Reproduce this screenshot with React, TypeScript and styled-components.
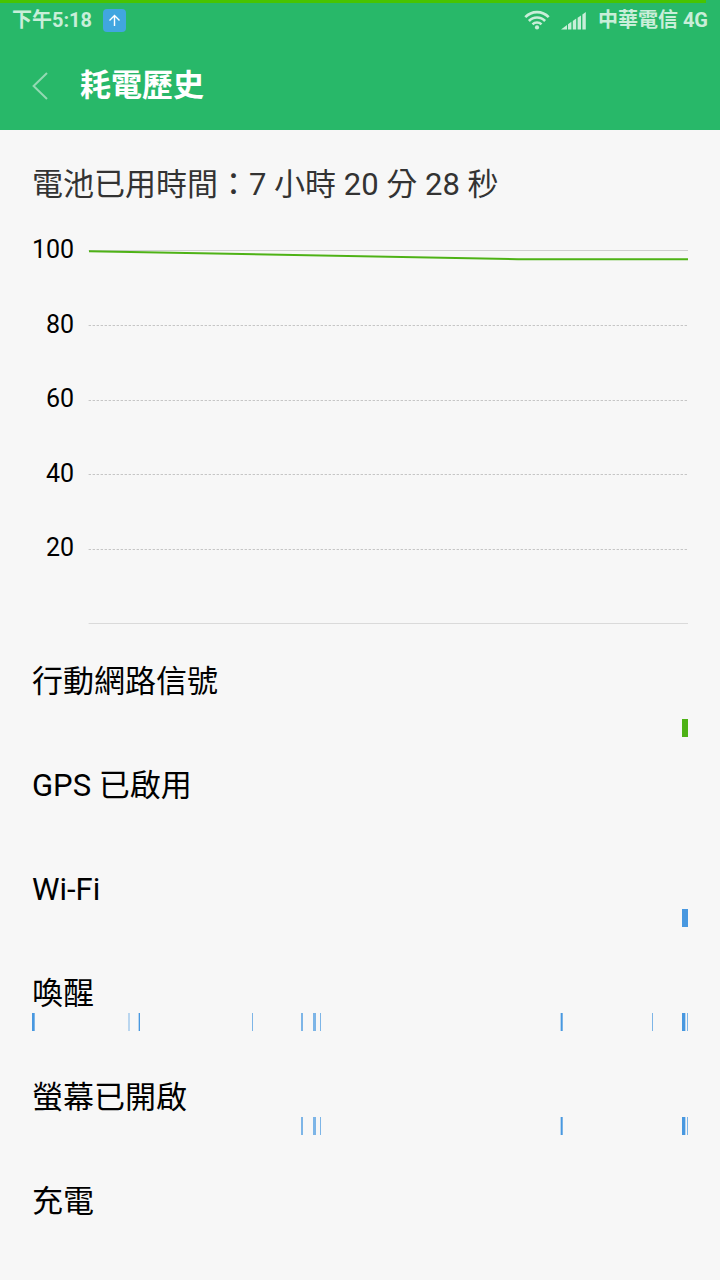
import React from "react";
import styled, { createGlobalStyle } from "styled-components";

const GlobalStyle = createGlobalStyle`
  *, *::before, *::after { box-sizing: border-box; }
  body {
    margin: 0;
    background: #f7f7f7;
    color: #000;
    font-family: Roboto, "Noto Sans CJK TC", sans-serif;
  }
`;

const Page = styled.div`
  display: flex;
  flex-direction: column;
`;

const TopArea = styled.div`
  background: #28b869;
`;

const BatteryTrack = styled.div`
  height: 3px;
`;

const BatteryFill = styled.div`
  height: 100%;
  background: #48c400;
`;

const StatusBar = styled.div`
  display: flex;
  align-items: center;
  justify-content: space-between;
  height: 34px;
  padding: 0 12px;
  color: #c9eed9;
  font-size: 20px;
  font-weight: 700;
  line-height: 32px;
`;

const StatusGroup = styled.div`
  display: flex;
  align-items: center;
  gap: 11px;
`;

const UploadBadge = styled.span`
  display: flex;
  align-items: center;
  justify-content: center;
  width: 23px;
  height: 23px;
  border-radius: 4px;
  background: #41a6e0;
`;

const TitleBar = styled.header`
  display: flex;
  align-items: center;
  gap: 16px;
  height: 93px;
  padding: 4px 16px 0;
`;

const BackButton = styled.button`
  display: flex;
  align-items: center;
  justify-content: center;
  width: 48px;
  height: 48px;
  padding: 0;
  border: 0;
  background: none;
`;

const Title = styled.h1`
  margin: 0;
  color: #fff;
  font-size: 31px;
  font-weight: 700;
  line-height: 40px;
`;

const Content = styled.main`
  display: flex;
  flex-direction: column;
  padding: 35px 32px 32px;
`;

const Summary = styled.p`
  margin: 0 0 31px;
  color: #333;
  font-size: 31px;
  line-height: 40px;
`;

const Chart = styled.section`
  display: flex;
  gap: 14px;
  margin-bottom: 38px;
`;

const AxisLabels = styled.div`
  display: flex;
  flex-direction: column;
  justify-content: space-between;
  width: 42px;
  height: 326px;
  font-size: 25px;
  line-height: 28px;
  text-align: right;
`;

const PlotArea = styled.div`
  flex: 1;
  min-width: 0;
  padding-top: 14px;
`;

const Plot = styled.svg`
  display: block;
  width: 100%;
  height: 374px;
`;

const History = styled.section`
  display: flex;
  flex-direction: column;
  gap: 46px;
`;

const HistoryRow = styled.div`
  display: flex;
  flex-direction: column;
  height: 58px;
`;

const RowLabel = styled.h2<{ $spaced?: boolean }>`
  margin: 0 0 ${(p) => (p.$spaced ? 17 : -1)}px;
  font-size: 31px;
  font-weight: 400;
  line-height: 40px;
`;

const Timeline = styled.svg`
  display: block;
  flex: none;
  width: 100%;
  height: 18px;
`;

type Tick = { x: number; w: number; o?: number };
type Row = { label: string; color: string; ticks: Tick[]; spaced?: boolean };

const BLUE = "#4898e0";
const GREEN = "#4eb216";

const screenTicks: Tick[] = [
  { x: 269, w: 2, o: 0.7 },
  { x: 281, w: 3, o: 0.7 },
  { x: 288, w: 1, o: 0.7 },
  { x: 528, w: 1, o: 0.35 },
  { x: 529, w: 1 },
  { x: 530, w: 1, o: 0.7 },
  { x: 650, w: 3 },
  { x: 653, w: 1, o: 0.35 },
  { x: 655, w: 1, o: 0.7 },
];

const wakeTicks: Tick[] = [
  { x: 0, w: 2 },
  { x: 2, w: 1, o: 0.7 },
  { x: 96, w: 2, o: 0.35 },
  { x: 106, w: 1, o: 0.35 },
  { x: 107, w: 1 },
  { x: 220, w: 1, o: 0.7 },
  { x: 620, w: 1, o: 0.7 },
  ...screenTicks,
];

const rows: Row[] = [
  { label: "行動網路信號", color: GREEN, ticks: [{ x: 650, w: 6 }], spaced: true },
  { label: "GPS 已啟用", color: BLUE, ticks: [] },
  { label: "Wi-Fi", color: BLUE, ticks: [{ x: 650, w: 6 }] },
  { label: "喚醒", color: BLUE, ticks: wakeTicks },
  { label: "螢幕已開啟", color: BLUE, ticks: screenTicks },
  { label: "充電", color: BLUE, ticks: [] },
];

const WifiIcon = () => (
  <svg width="26" height="20" viewBox="0 0 26 20" fill="none" stroke="currentColor" strokeWidth="2.6" aria-label="Wi-Fi">
    <path d="M1.3 7.2A16 16 0 0 1 24.7 7.2" />
    <path d="M4.9 11A11 11 0 0 1 21.1 11" />
    <path d="M8.5 14.4A6.4 6.4 0 0 1 17.5 14.4" />
    <circle cx="13" cy="17.4" r="2.1" fill="currentColor" stroke="none" />
  </svg>
);

const SignalIcon = () => (
  <svg width="26" height="20" viewBox="0 0 26 20" fill="currentColor" aria-label="訊號">
    <path d="M0 19.5L6 15V19.5Z" />
    <path d="M7 14.2L10.4 11.8V19.5H7Z" />
    <path d="M11.8 10.9L15.2 8.6V19.5H11.8Z" />
    <path d="M16.6 7.8L20 5.4V19.5H16.6Z" />
    <path d="M21.4 4.4L24.8 2V19.5H21.4Z" />
  </svg>
);

const UploadIcon = () => (
  <svg width="13" height="13" viewBox="0 0 13 13" fill="none" stroke="#fff" strokeWidth="1.4" aria-hidden="true">
    <path d="M6.5 12V1.6M1.5 6.4L6.5 1.4L11.5 6.4" />
  </svg>
);

const BackIcon = () => (
  <svg width="18" height="30" viewBox="0 0 18 30" fill="none" stroke="#93d9b3" strokeWidth="2" aria-hidden="true">
    <path d="M16 2L2.6 15L16 28" />
  </svg>
);

const PLOT_LINES = [75, 150, 224, 299];

export default function App() {
  return (
    <Page>
      <GlobalStyle />
      <TopArea>
        <BatteryTrack>
          <BatteryFill style={{ width: "98%" }} />
        </BatteryTrack>
        <StatusBar>
          <StatusGroup>
            <span>下午5:18</span>
            <UploadBadge>
              <UploadIcon />
            </UploadBadge>
          </StatusGroup>
          <StatusGroup>
            <WifiIcon />
            <SignalIcon />
            <span>中華電信 4G</span>
          </StatusGroup>
        </StatusBar>
        <TitleBar>
          <BackButton type="button" aria-label="返回">
            <BackIcon />
          </BackButton>
          <Title>耗電歷史</Title>
        </TitleBar>
      </TopArea>

      <Content>
        <Summary>電池已用時間：7 小時 20 分 28 秒</Summary>

        <Chart>
          <AxisLabels>
            {[100, 80, 60, 40, 20].map((n) => (
              <span key={n}>{n}</span>
            ))}
          </AxisLabels>
          <PlotArea>
            <Plot viewBox="0 0 600 374" preserveAspectRatio="none" role="img" aria-label="電量">
              <path d="M0.6 0.5H600" stroke="#cfcfcf" />
              <path d="M0.6 373.5H600" stroke="#dadada" />
              {PLOT_LINES.map((y) => (
                <path key={y} d={`M0.6 ${y + 0.5}H599`} stroke="#c6c6c6" strokeDasharray="2.4 1.6" />
              ))}
              <path d="M1 1.2L430 9.2H600" fill="none" stroke={GREEN} strokeWidth="2" />
            </Plot>
          </PlotArea>
        </Chart>

        <History>
          {rows.map((row) => (
            <HistoryRow key={row.label}>
              <RowLabel $spaced={row.spaced}>{row.label}</RowLabel>
              <Timeline viewBox="0 0 656 18" preserveAspectRatio="none" aria-hidden="true">
                {row.ticks.map((t) => (
                  <rect key={t.x} x={t.x} y={0} width={t.w} height={18} fill={row.color} opacity={t.o ?? 1} />
                ))}
              </Timeline>
            </HistoryRow>
          ))}
        </History>
      </Content>
    </Page>
  );
}
